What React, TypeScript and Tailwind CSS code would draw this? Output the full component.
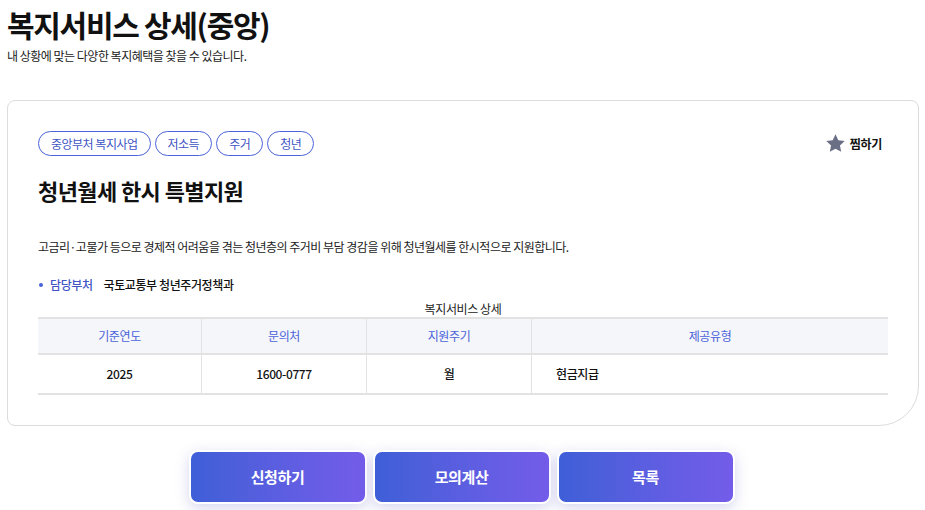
import React from "react";

const font = { fontFamily: '"Noto Sans CJK KR", "Noto Sans", sans-serif' };

export default function App() {
  const tags = ["중앙부처 복지사업", "저소득", "주거", "청년"];
  return (
    <div style={font} className="w-[925px] h-[510px] bg-white text-[#111] overflow-hidden">
      <div className="px-[7px] pt-[2px]">
        <h1 className="text-[30px] font-bold leading-[44px] tracking-[-1.3px]">복지서비스 상세(중앙)</h1>
        <p className="text-[12px] leading-[18px] mt-[1px] text-[#222] tracking-[-0.5px]">내 상황에 맞는 다양한 복지혜택을 찾을 수 있습니다.</p>

        <div className="mt-[35px] w-[912px] h-[326px] border border-[#dcdcdc] rounded-[8px] rounded-br-[40px] px-[30px] pt-[30px]">
          <div className="flex items-center justify-between">
            <div className="flex gap-[4px]">
              {tags.map((t) => (
                <span
                  key={t}
                  className="h-[25px] px-[12px] flex items-center rounded-full border border-[#4a63d9] text-[#3f55c4] text-[12px] leading-none tracking-[-0.5px]"
                >
                  {t}
                </span>
              ))}
            </div>
            <div className="flex items-center gap-[4px] mr-[6px]">
              <svg width="21" height="21" viewBox="0 0 24 24">
                <path
                  d="M12 1.5l3.2 6.7 7.3.9-5.4 5.1 1.4 7.3L12 17.9l-6.5 3.6 1.4-7.3-5.4-5.1 7.3-.9z"
                  fill="#6b6f86"
                />
              </svg>
              <span className="text-[12px] font-bold tracking-[-0.3px]">찜하기</span>
            </div>
          </div>

          <h2 className="mt-[18px] text-[22px] font-bold leading-[32px] tracking-[-0.6px]">청년월세 한시 특별지원</h2>

          <p className="mt-[32px] text-[12px] leading-[18px] text-[#222] tracking-[-0.5px]">
            고금리·고물가 등으로 경제적 어려움을 겪는 청년층의 주거비 부담 경감을 위해 청년월세를 한시적으로 지원합니다.
          </p>

          <div className="mt-[20px] flex items-center text-[12px] leading-[18px] tracking-[-0.4px]">
            <span className="w-[4px] h-[4px] rounded-full bg-[#4a63d9] ml-[1px] mr-[7px]" />
            <span className="text-[#3f55c4] font-medium">담당부처</span>
            <span className="ml-[11px] font-medium text-[#111]">국토교통부 청년주거정책과</span>
          </div>

          <div className="mt-[7px]">
            <div className="text-center text-[12px] leading-[16px] text-[#222] tracking-[-0.4px]">복지서비스 상세</div>
            <div className="border-t-2 border-b-2 border-[#e2e2e2] text-[12px] tracking-[-0.4px]">
              <div className="grid grid-cols-[164px_165px_165px_1fr] bg-[#f5f6fa] h-[36px] border-b-2 border-[#e2e2e2]">
                {["기준연도", "문의처", "지원주기", "제공유형"].map((h, i) => (
                  <div
                    key={h}
                    className={`flex items-center justify-center text-[#4a63d9] ${i < 3 ? "border-r border-[#e2e2e2]" : ""}`}
                  >
                    {h}
                  </div>
                ))}
              </div>
              <div className="grid grid-cols-[164px_165px_165px_1fr] h-[38px] font-medium">
                <div className="flex items-center justify-center border-r border-[#e2e2e2]">2025</div>
                <div className="flex items-center justify-center border-r border-[#e2e2e2]">1600-0777</div>
                <div className="flex items-center justify-center border-r border-[#e2e2e2]">월</div>
                <div className="flex items-center pl-[24px]">현금지급</div>
              </div>
            </div>
          </div>
        </div>

        <div className="mt-[24px] flex justify-center gap-[6px] pr-[2px]">
          {["신청하기", "모의계산", "목록"].map((b) => (
            <button
              key={b}
              className="w-[178px] h-[54px] rounded-[9px] border-2 border-white bg-gradient-to-r from-[#3e5fd7] to-[#735ce9] text-white text-[15px] font-bold tracking-[-0.4px] shadow-[0_4px_14px_rgba(90,90,200,0.25)]"
            >
              {b}
            </button>
          ))}
        </div>
      </div>
    </div>
  );
}
